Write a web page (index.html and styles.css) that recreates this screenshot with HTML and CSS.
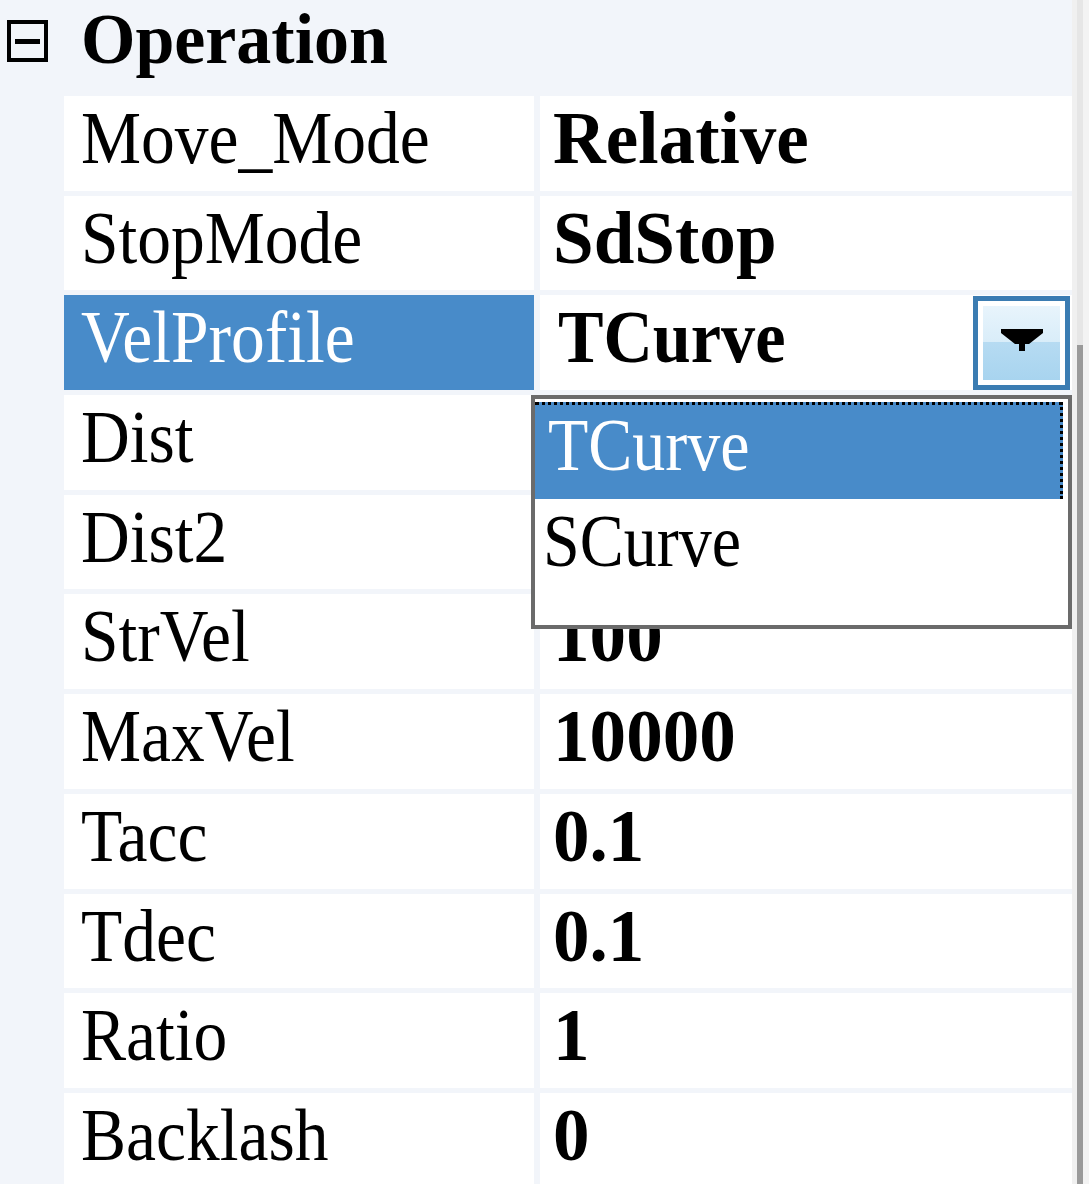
FILE: index.html
```html
<!DOCTYPE html>
<html>
<head>
<meta charset="utf-8">
<link rel="stylesheet" href="styles.css">
</head>
<body>
<div class="grid">
  <div class="main">
    <div class="cat">
      <span class="toggle"><span class="minus"></span></span>
      <span class="cat-label">Operation</span>
    </div>
    <div class="rows">
      <div class="row"><div class="name"><span class="t">Move_Mode</span></div><div class="value"><span class="tb">Relative</span></div></div>
      <div class="row"><div class="name"><span class="t">StopMode</span></div><div class="value"><span class="tb">SdStop</span></div></div>
      <div class="row sel">
        <div class="name"><span class="t">VelProfile</span></div>
        <div class="value"><span class="tb tc">TCurve</span>
          <div class="btn"><div class="btn-in"><svg class="arrow" width="42" height="22" viewBox="0 0 42 22"><path d="M0 0H42V4L28 15H24V22H18V15H14L0 4Z" fill="#000"/></svg></div></div>
        </div>
        <div class="list">
          <div class="item on"><span class="t">TCurve</span></div>
          <div class="item"><span class="t">SCurve</span></div>
        </div>
      </div>
      <div class="row"><div class="name"><span class="t">Dist</span></div><div class="value"></div></div>
      <div class="row"><div class="name"><span class="t">Dist2</span></div><div class="value"></div></div>
      <div class="row"><div class="name"><span class="t">StrVel</span></div><div class="value"><span class="tb">100</span></div></div>
      <div class="row"><div class="name"><span class="t">MaxVel</span></div><div class="value"><span class="tb">10000</span></div></div>
      <div class="row"><div class="name"><span class="t">Tacc</span></div><div class="value"><span class="tb">0.1</span></div></div>
      <div class="row"><div class="name"><span class="t">Tdec</span></div><div class="value"><span class="tb">0.1</span></div></div>
      <div class="row"><div class="name"><span class="t">Ratio</span></div><div class="value"><span class="tb">1</span></div></div>
      <div class="row"><div class="name"><span class="t">Backlash</span></div><div class="value"><span class="tb">0</span></div></div>
    </div>
  </div>
  <div class="scroll">
    <div class="s1"></div>
    <div class="s2"><div class="s2-top"></div><div class="s2-bot"></div></div>
    <div class="s3"></div>
  </div>
</div>
</body>
</html>
```
FILE: styles.css
```css
html, body {
  margin: 0;
  padding: 0;
}
body {
  width: 1091px;
  height: 1184px;
  overflow: hidden;
  background: #f2f5fa;
  font-family: "Liberation Serif", "Times New Roman", serif;
  color: #000;
}
.grid {
  display: flex;
  height: 1184px;
}
.main {
  width: 1072px;
  flex: none;
}
.cat {
  height: 96px;
  display: flex;
  align-items: flex-start;
}
.toggle {
  box-sizing: border-box;
  width: 41px;
  height: 42px;
  border: 4px solid #000;
  margin: 20px 0 0 7px;
  display: flex;
  align-items: center;
  justify-content: center;
  flex: none;
}
.minus {
  width: 25px;
  height: 5px;
  background: #000;
}
.cat-label {
  margin-left: 33px;
  font-size: 71px;
  font-weight: bold;
  line-height: 79px;
  display: inline-block;
  transform: scaleX(0.985);
  transform-origin: left;
}
.rows {
  display: flex;
  flex-direction: column;
  gap: 5px;
  padding-left: 64px;
}
.row {
  position: relative;
  display: grid;
  grid-template-columns: 470px 532px;
  column-gap: 6px;
  height: 94.7px;
}
.name, .value {
  background: #fff;
  font-size: 75px;
  line-height: 83px;
  white-space: nowrap;
  position: relative;
}
.name {
  padding-left: 17px;
}
.value {
  padding-left: 13px;
}
.t {
  display: inline-block;
  transform: scaleX(0.9);
  transform-origin: left;
}
.tb {
  display: inline-block;
  font-weight: bold;
  transform: scaleX(0.975);
  transform-origin: left;
}
.tc {
  margin-left: 5px;
  transform: scaleX(0.91);
}
.sel .name {
  background: #488bc9;
  color: #fff;
}
.btn {
  position: absolute;
  right: 2px;
  top: 1px;
  width: 97px;
  height: 94px;
  box-sizing: border-box;
  border: 5px solid #3b7cb2;
  padding: 5px;
  background: #fff;
}
.btn-in {
  width: 100%;
  height: 100%;
  background: linear-gradient(#e8f4fc 0%, #d9edf9 48%, #b6dbf2 49%, #a8d4ef 100%);
  display: flex;
  align-items: center;
  justify-content: center;
}
.arrow {
  display: block;
  margin-bottom: 6px;
}
.list {
  position: absolute;
  left: 467px;
  top: 100px;
  width: 541px;
  height: 234px;
  box-sizing: border-box;
  border: 4px solid #6b6b6b;
  background: #fff;
  z-index: 2;
  padding-top: 3px;
}
.item {
  height: 97px;
  font-size: 75px;
  line-height: 83px;
  padding-left: 8px;
  white-space: nowrap;
}
.item .t {
  transform: scaleX(0.88);
}
.item.on {
  background: #488bc9;
  color: #fff;
  margin-right: 5px;
  padding-left: 13px;
  box-sizing: border-box;
  border: 3px dotted #000;
  border-bottom: none;
  border-left: none;
  line-height: 80px;
}
.scroll {
  flex: 1;
  display: flex;
  background: #fff;
}
.s1 {
  width: 5px;
  background: #f0f0f0;
}
.s2 {
  width: 6px;
  display: flex;
  flex-direction: column;
}
.s2-top {
  height: 345px;
  background: #e6e6e6;
}
.s2-bot {
  flex: 1;
  background: #9a9a9a;
}
.s3 {
  width: 6px;
  background: #f3f3f3;
}
```
